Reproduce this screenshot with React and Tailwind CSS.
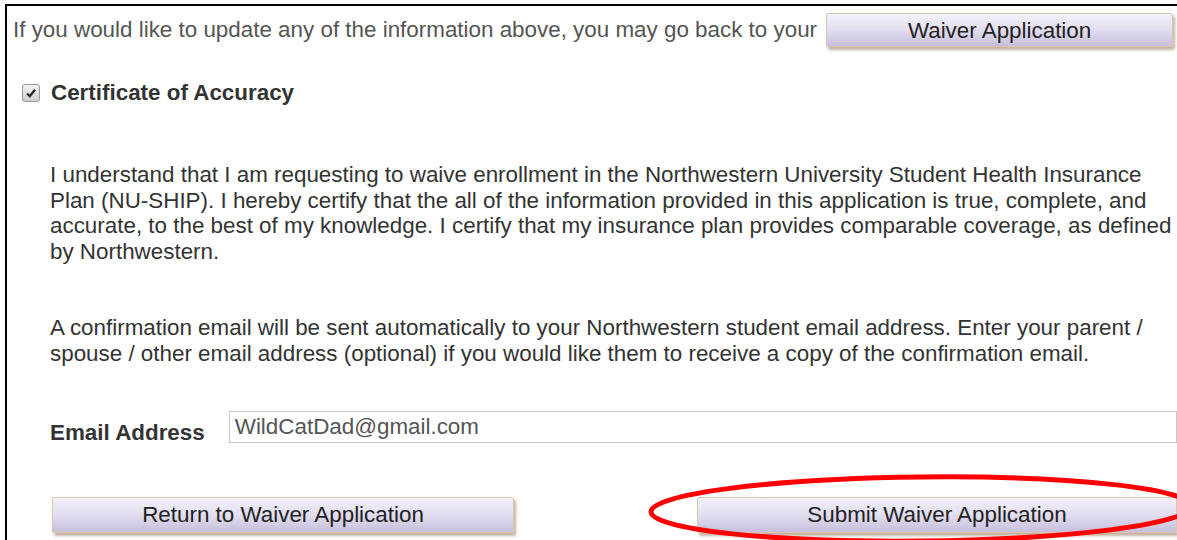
export default function App() {
  const btn =
    "bg-gradient-to-b from-[#f3f1fa] via-[#e2def0] to-[#c6bedc] border border-[#dcc6ae] rounded-[2px] shadow-[2px_3px_3px_rgba(150,115,85,0.55)] text-[22.4px] text-[#222]"

  return (
    <div className="w-[1177px] h-[540px] overflow-hidden bg-white font-['Liberation_Sans',Arial,sans-serif]">
      <div className="relative ml-[5px] mt-[4px] h-[600px] border-l-[2px] border-t-[2px] border-black pl-[6px] text-[#333]">
        {/* back link row */}
        <div className="flex items-center h-[42px] pt-[6px]">
          <span className="text-[22.4px] text-[#555] whitespace-nowrap">
            If you would like to update any of the information above, you may go back to your
          </span>
          <button className={`${btn} h-[34px] ml-[9px] w-[347px]`}>Waiver Application</button>
        </div>

        {/* certificate checkbox */}
        <label className="flex items-center mt-[28px] ml-[9px] h-[34px]">
          <span className="w-[18px] h-[18px] rounded-[3px] border border-[#999] bg-gradient-to-b from-[#f2f2f2] to-[#cfcfcf] flex items-center justify-center">
            <svg viewBox="0 0 12 12" className="w-[12px] h-[12px]">
              <path d="M2 6.5 L4.8 9.2 L10 2.8" fill="none" stroke="#222" strokeWidth="2.2" />
            </svg>
          </span>
          <span className="ml-[11px] text-[22.4px] font-bold text-[#333]">Certificate of Accuracy</span>
        </label>

        <div className="pl-[37px] w-[1168px] text-[22.4px] leading-[25.5px]">
          <p className="mt-[52px]">
            I understand that I am requesting to waive enrollment in the Northwestern University Student Health Insurance
            Plan (NU-SHIP). I hereby certify that the all of the information provided in this application is true, complete, and
            accurate, to the best of my knowledge. I certify that my insurance plan provides comparable coverage, as defined
            by Northwestern.
          </p>
          <p className="mt-[51px]">
            A confirmation email will be sent automatically to your Northwestern student email address. Enter your parent /
            spouse / other email address (optional) if you would like them to receive a copy of the confirmation email.
          </p>
        </div>

        {/* email field */}
        <div className="flex items-end mt-[45px] ml-[37px]">
          <span className="text-[22.4px] font-bold text-[#333] mb-[-7px] w-[181px]">Email Address</span>
          <input
            defaultValue="WildCatDad@gmail.com"
            className="h-[32px] w-[960px] border border-[#c8c8c8] px-[5px] text-[22.4px] text-[#555] outline-none"
          />
        </div>

        {/* action buttons */}
        <div className="flex mt-[54px] ml-[39px]">
          <button className={`${btn} w-[462px] h-[36px]`}>Return to Waiver Application</button>
          <button className={`${btn} ml-[183px] w-[480px] h-[36px]`}>Submit Waiver Application</button>
        </div>

        {/* red highlight around submit */}
        <svg className="absolute left-0 top-0 pointer-events-none" width="1177" height="600">
          <ellipse cx="914" cy="503" rx="270" ry="32" fill="none" stroke="#ff0000" strokeWidth="5" transform="rotate(-0.6 914 503)" />
        </svg>
      </div>
    </div>
  )
}
